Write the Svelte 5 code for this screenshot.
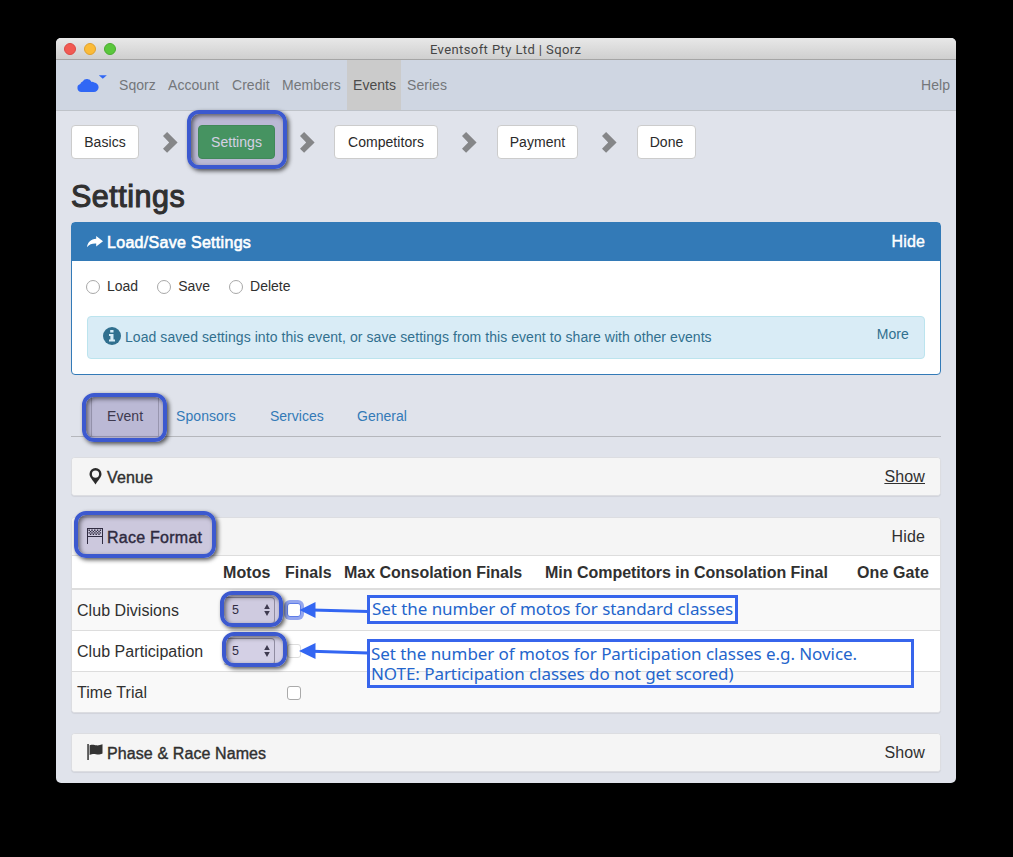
<script>
  const nav = [
    { label: 'Sqorz', w: 49 },
    { label: 'Account', w: 64 },
    { label: 'Credit', w: 50 },
    { label: 'Members', w: 71 },
    { label: 'Events', w: 54, active: true },
    { label: 'Series', w: 52 }
  ];
  const steps = [
    { label: 'Basics', w: 68, gap: 24 },
    { label: 'Settings', w: 77, gap: 25, active: true },
    { label: 'Competitors', w: 104, gap: 24 },
    { label: 'Payment', w: 81, gap: 24 },
    { label: 'Done', w: 59 }
  ];
  const rows = [
    { label: 'Club Divisions', motos: 5, focus: true },
    { label: 'Club Participation', motos: 5, faint: true },
    { label: 'Time Trial' }
  ];
</script>

<main class="window">
  <header class="titlebar">
    <i class="dot red"></i><i class="dot yellow"></i><i class="dot green"></i>
    <span class="title">Eventsoft Pty Ltd | Sqorz</span>
  </header>

  <nav class="navbar">
    <svg class="brand" width="36" height="20" viewBox="0 0 36 20">
      <path d="M5.300 18A4.100 4.100 0 0 1 4.300 10 3.400 3.400 0 0 1 6.600 7.400 5.200 5.200 0 0 1 15.600 7.900 3.600 3.600 0 0 1 18.200 8.600 4.700 4.700 0 0 1 17.600 18z" fill="#3067f5" />
      <path d="M22.800 1.200h8l-4 3.600z" fill="#3067f5" />
    </svg>
    {#each nav as item}
      <a class="nav-item" class:active={item.active} style="width:{item.w}px">{item.label}</a>
    {/each}
    <a class="nav-item help">Help</a>
  </nav>

  <section class="content">
    <div class="steps">
      {#each steps as s, i}
        <button class="step" class:current={s.active} style="width:{s.w}px">{s.label}</button>
        {#if i < steps.length - 1}
          <svg class="chev" style="margin-left:{s.gap}px" width="15" height="21" viewBox="0 0 15 21">
            <path d="M4.100 0 14.600 10.400 4.100 20.800 0 16.700l6.200-6.300L0 4.100z" fill="#858688" />
          </svg>
        {/if}
      {/each}
    </div>

    <h1>Settings</h1>

    <div class="panel primary">
      <div class="phead">
        <svg class="ico" width="16" height="12" viewBox="0 0 16 12">
          <path d="M9.200 0 16 5.200 9.200 10.400V7.600C5.400 7.400 2.400 8.200 0 11.200.7 6.200 3.900 3 9.200 2.800z" fill="#fff" />
        </svg>
        <b class="med wide">Load/Save Settings</b>
        <span class="toggle med">Hide</span>
      </div>
      <div class="pbody">
        <div class="radios">
          <label><i class="radio"></i>Load</label>
          <label><i class="radio"></i>Save</label>
          <label><i class="radio"></i>Delete</label>
        </div>
        <div class="alert">
          <svg width="18" height="18" viewBox="0 0 18 18">
            <circle cx="9" cy="9" r="9" fill="#31708f" />
            <path d="M7.200 2.900h3.300v2.600H7.200zM6 7h4.500v5.400H12v2H6v-2h1.400V9H6z" fill="#d9edf7" />
          </svg>
          <span class="msg">Load saved settings into this event, or save settings from this event to share with other events</span>
          <span class="more">More</span>
        </div>
      </div>
    </div>

    <div class="tabs">
      <a class="tab on">Event</a>
      <a class="tab t2">Sponsors</a>
      <a class="tab t3">Services</a>
      <a class="tab t4">General</a>
    </div>

    <div class="panel venue">
      <div class="phead">
        <svg class="ico pin" width="13" height="17" viewBox="0 0 13 17">
          <path fill-rule="evenodd" d="M6.500 0A6 6 0 0 0 .5 6c0 3.200 3 5.600 6 10.600C9.500 11.600 12.500 9.200 12.500 6a6 6 0 0 0-6-6zm0 2.500a3.600 3.600 0 1 1 0 7.200 3.600 3.600 0 0 1 0-7.200z" fill="#2b2b2b" />
        </svg>
        <b class="med">Venue</b>
        <span class="toggle under">Show</span>
      </div>
    </div>

    <div class="panel race">
      <div class="phead">
        <svg class="ico flag" width="16" height="16" viewBox="0 0 16 16">
          <path d="M.5 0v16M15.500 0v16M0 .5h16M0 8.500h16" stroke="#333" fill="none" />
          <path d="M1.500 2.200h13M1.500 4.900h13M2.900 3.550h11M2.900 6.250h11" stroke="#333" stroke-width="1.350" stroke-dasharray="1.400 1.400" fill="none" />
        </svg>
        <b class="med race-title">Race Format</b>
        <span class="toggle">Hide</span>
      </div>
      <div class="row thead">
        <span></span><span>Motos</span><span>Finals</span><span class="c-long">Max Consolation Finals</span><span class="c-long">Min Competitors in Consolation Final</span><span>One Gate</span>
      </div>
      {#each rows as r}
        <div class="row">
          <span class="name">{r.label}</span>
          <span>
            {#if r.motos}
              <span class="select">{r.motos}
                <svg width="6" height="12" viewBox="0 0 6 12"><path d="M3 0 5.800 5H.2zM3 12 .2 7h5.600z" fill="#444" /></svg>
              </span>
            {/if}
          </span>
          <span><i class="check" class:focus={r.focus} class:faint={r.faint}></i></span>
        </div>
      {/each}
    </div>

    <div class="panel phase">
      <div class="phead">
        <svg class="ico flag" width="16" height="16" viewBox="0 0 16 16">
          <path d="M.3 0h1.500v16H.3zM2.600 1.200C6 .1 7.400 1 9.200 1.300c2 .3 4-.2 6.300-1v9.300c-2.800 1.200-4.600 1.200-6.500.7-2-.5-3.600-.5-6.400.6z" fill="#333" />
        </svg>
        <b class="med">Phase &amp; Race Names</b>
        <span class="toggle">Show</span>
      </div>
    </div>
  </section>

  <i class="mark m-step"></i>
  <i class="mark m-tab"></i>
  <i class="mark m-race"></i>
  <i class="mark m-sel1"></i>
  <i class="mark m-sel2"></i>

  <svg class="arrows" width="72" height="64" viewBox="298 599 72 64">
    <path d="M312 610 368 611.500M312 651.300 368 653" stroke="#3366f2" stroke-width="3" />
    <path d="M299.500 610 315.500 602v16zM299 651 315.500 643v16z" fill="#3366f2" />
  </svg>
  <div class="note n1"><span>Set the number of motos for standard classes</span></div>
  <div class="note n2"><span>Set the number of motos for Participation classes e.g. Novice.</span><span>NOTE: Participation classes do not get scored)</span></div>
</main>

<style>
  :global(body) { background: #000; }
  * { box-sizing: border-box; }
  .window {
    position: relative;
    width: 900px;
    height: 745px;
    margin: 38px 0 0 56px;
    background: #e0e3eb;
    border-radius: 5px;
    overflow: hidden;
    font: 14px/20px "Liberation Sans", Arial, sans-serif;
    color: #303030;
    white-space: nowrap;
  }
  :global(#app) { display: flow-root; }
  .titlebar {
    display: flex;
    align-items: center;
    height: 22px;
    padding-left: 8px;
    background: linear-gradient(#e8e8e8, #cfcfcf);
    border-bottom: 1px solid #a5a5a5;
  }
  .dot { width: 12px; height: 12px; border-radius: 50%; margin-right: 8px; border: 1px solid; }
  .red { background: #f25a52; border-color: #db4a44; }
  .yellow { background: #fbbb37; border-color: #dfa12e; }
  .green { background: #5ac73c; border-color: #4bab31; }
  .title { margin-left: 306px; font: 13px/20px Roboto, sans-serif; letter-spacing: .4px; color: #454545; padding-top: 2px; }
  .navbar {
    display: flex;
    height: 51px;
    background: #cfd6e2;
    border-bottom: 1px solid #bfc3c9;
  }
  .brand { margin: 14px 1px 0 20px; flex: none; }
  .nav-item { padding: 15px 0 0 6px; letter-spacing: .05px; color: #74767a; flex: none; }
  .nav-item.active { background: #cbcbcb; color: #4c4c4c; }
  .help { margin-left: auto; padding-right: 6px; }

  .content { padding: 14px 15px 0; }
  .steps { display: flex; align-items: center; height: 34px; }
  .step {
    height: 34px; padding: 0; flex: none;
    border: 1px solid #ccc; border-radius: 4px;
    background: #fff; color: #2a2a2a;
    font: inherit; letter-spacing: .05px;
  }
  .step.current { background: #4eb35b; border-color: #48a651; color: #fff; }
  .chev { margin-right: 20px; flex: none; }
  .chev:nth-of-type(2) { margin-right: 19px; }
  h1 {
    margin: 20px 0 0; font-size: 30.5px; line-height: 34px; font-weight: 400;
    letter-spacing: .5px; -webkit-text-stroke: 1.1px #303030;
  }
  .panel {
    border: 1px solid #dcdde1; border-radius: 4px; background: #fff;
    box-shadow: 0 1px 1px rgba(0, 0, 0, .07);
  }
  .phead {
    display: flex; align-items: center; height: 37px; padding: 0 15px;
    background: #f5f5f5; font-size: 16px; border-radius: 3px;
  }
  .med { font-weight: 400; -webkit-text-stroke: .4px currentColor; }
  .phead b { padding-top: 2px; margin-left: 4px; letter-spacing: .1px; }
  .phead b.wide { letter-spacing: .3px; -webkit-text-stroke-width: .6px; }
  .phead b.race-title { letter-spacing: .25px; }
  .toggle { margin-left: auto; letter-spacing: .15px; }
  .under { text-decoration: underline; }
  .primary { height: 153px; margin-top: 9px; border-color: #337ab7; box-shadow: none; }
  .primary .phead { height: 38px; background: #337ab7; color: #fff; border-radius: 0; }
  .pbody { padding: 15px 15px 0 14px; }
  .radios { display: flex; }
  .radios label { display: flex; align-items: center; margin-right: 19px; }
  .radio { width: 14px; height: 14px; border: 1px solid #a8a8a8; border-radius: 50%; margin: 2px 7px 0 0; }
  .alert {
    display: flex; height: 43px; margin: 20px 0 0 1px; padding: 10px 15px;
    border: 1px solid #bce4ee; border-radius: 4px; background: #d9ecf6; color: #31708f;
  }
  .msg { margin-left: 4px; letter-spacing: .064px; }
  .more { margin: -3px 0 0 auto; letter-spacing: .1px; }
  .tabs { display: flex; height: 42px; margin-top: 20px; border-bottom: 1px solid #b5b7bc; margin-bottom: 20px; }
  .tab { color: #337ab7; padding-top: 11px; letter-spacing: .08px; }
  .tab.on { margin-left: 20px; width: 68px; padding-left: 15px; border: 1px solid #b5b7bc; border-width: 0 1px; color: #444; }
  .t2 { margin-left: 17px; width: 94px; }
  .t3 { width: 87px; letter-spacing: 0; }
  .t4 { letter-spacing: 0; }
  .venue { height: 39px; }
  .pin { margin: 0 1px 0 2px; }
  .flag { margin-top: -1px; }
  .race { height: 196px; margin-top: 21px; overflow: hidden; }
  .race .phead { border-bottom: 1px solid #ddd; height: 38px; border-radius: 0; }
  .row {
    display: grid; grid-template-columns: 146px 62px 59px 201px 312px 1fr;
    padding-left: 5px; height: 41px; align-items: center;
    font-size: 16px; border-bottom: 1px solid #ddd; background: #fff; letter-spacing: .1px;
  }
  .name { padding-top: 1px; letter-spacing: .05px; }
  .row:nth-child(odd) { background: #f9f9f9; }
  .row.thead { height: 34px; padding-top: 2px; font-weight: 700; border-bottom: 2px solid #ddd; background: #fff; }
  .c-long { letter-spacing: -.02px; }
  .row:last-child { border: 0; }
  .row:last-child .name { padding-top: 0; }
  .select {
    display: flex; justify-content: space-between; align-items: center;
    width: 52px; height: 27px; padding: 0 4px 0 8px;
    border: 1px solid #aaa; border-left-color: transparent; border-radius: 4px; font-size: 12.5px; color: #333;
  }
  .check { display: block; width: 14px; height: 14px; border: 1px solid #aaa; border-radius: 3px; background: #fff; margin-left: 2px; }
  .check.focus { border-color: #5f7de8; box-shadow: 0 0 0 3px #94a6ef; }
  .check.faint { border-color: #ddd; }
  .phase { height: 39px; margin-top: 20px; }

  .mark {
    position: absolute; border: 4px solid #3c59cf; border-radius: 12px;
    background: rgba(40, 20, 125, .2); background-clip: padding-box;
    box-shadow: 2px 2px 4px rgba(0, 0, 0, .65), inset 2px 2px 4px rgba(0, 0, 0, .5);
  }
  .m-step { left: 131px; top: 72px; width: 100px; height: 59px; }
  .m-tab { left: 26px; top: 355px; width: 85px; height: 49px; }
  .m-race { left: 18px; top: 473px; width: 142px; height: 47px; }
  .m-sel1 { left: 164px; top: 553px; width: 63px; height: 36px; }
  .m-sel2 { left: 166px; top: 594px; width: 65px; height: 35px; }
  .arrows { position: absolute; left: 242px; top: 561px; }
  .note {
    position: absolute; left: 311px; display: flex; flex-direction: column;
    border: 3px solid #3765ec; color: #2465cc;
    font: 17px/20px "Noto Sans", sans-serif; letter-spacing: -.06px; padding-left: 2px;
  }
  .n1 { top: 557px; width: 371px; height: 29px; background: rgba(255, 255, 255, .6); padding-top: 1px; }
  .n2 { top: 601px; width: 547px; height: 49px; padding: 2px 0 0 1px; }
</style>
